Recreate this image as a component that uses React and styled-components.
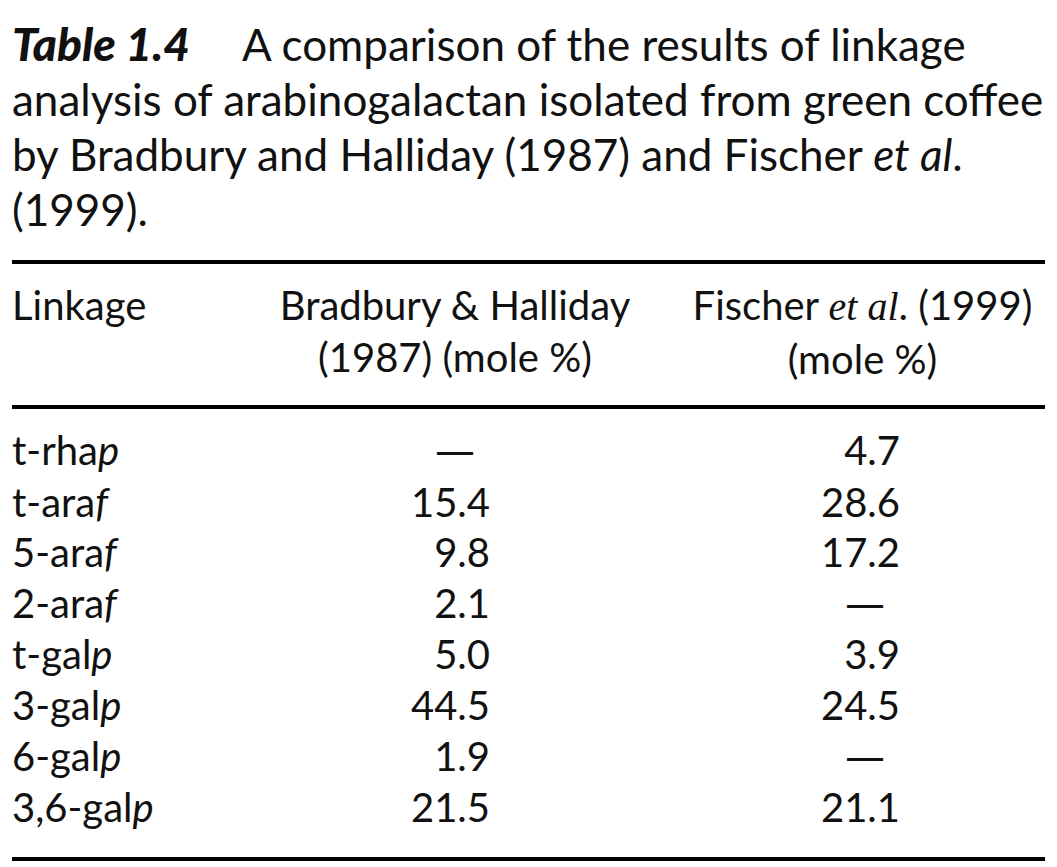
import styled, { createGlobalStyle } from "styled-components";

const GlobalStyle = createGlobalStyle`
  html, body {
    margin: 0;
    padding: 0;
    background: #fff;
  }
  body {
    font-family: Lato, "Open Sans", sans-serif;
    color: #111;
  }
`;

const Page = styled.div`
  width: 1033px;
  padding: 16px 12px 0 12px;
`;

const Caption = styled.p`
  margin: 0 0 23px 0;
  font-size: 44px;
  line-height: 55px;
  white-space: nowrap;
`;

const Label = styled.b`
  font-style: italic;
  font-weight: 900;
  font-size: 46px;
  margin-right: 52px;
`;

const Table = styled.div`
  display: grid;
  grid-template-columns: 238px 410px 385px;
  border-top: 4px solid #000;
  border-bottom: 4px solid #000;
  font-size: 40px;
`;

const Head = styled.div`
  display: contents;
`;

const HeadCell = styled.div`
  padding: 15px 0 20px ${p => p.$shift || 0}px;
  line-height: 52px;
  white-space: nowrap;
  text-align: ${p => (p.$center ? "center" : "left")};
  border-bottom: 4px solid #000;
`;

const Body = styled.div`
  grid-column: 1 / -1;
  display: grid;
  grid-template-columns: 238px 410px 385px;
  padding: 16px 0 24px 0;
  line-height: 50.6px;
`;

const Cell = styled.div`
  text-align: ${p => (p.$num ? "right" : "left")};
  padding-right: ${p => p.$pad || 0}px;
`;

const Dash = styled.span`
  font-family: "DejaVu Sans", sans-serif;
`;

const Serif = styled.i`
  font-family: "Liberation Serif", serif;
`;

const rows = [
  ["t-rha", "p", null, "4.7"],
  ["t-ara", "f", "15.4", "28.6"],
  ["5-ara", "f", "9.8", "17.2"],
  ["2-ara", "f", "2.1", null],
  ["t-gal", "p", "5.0", "3.9"],
  ["3-gal", "p", "44.5", "24.5"],
  ["6-gal", "p", "1.9", null],
  ["3,6-gal", "p", "21.5", "21.1"],
];

const Value = ({ v, pad }) =>
  v ? (
    <Cell $num $pad={pad}>{v}</Cell>
  ) : (
    <Cell $num $pad={pad + 15}>
      <Dash>—</Dash>
    </Cell>
  );

export default function App() {
  return (
    <Page>
      <GlobalStyle />
      <Caption>
        <Label>Table 1.4</Label>A comparison of the results of linkage
        <br />
        analysis of arabinogalactan isolated from green coffee
        <br />
        by Bradbury and Halliday (1987) and Fischer <i>et al</i>.
        <br />
        (1999).
      </Caption>
      <Table>
        <Head>
          <HeadCell>Linkage</HeadCell>
          <HeadCell $center>
            Bradbury &amp; Halliday
            <br />
            (1987) (mole %)
          </HeadCell>
          <HeadCell $center $shift={20}>
            Fischer <Serif>et al</Serif>. (1999)
            <br />
            (mole %)
          </HeadCell>
        </Head>
        <Body>
          {rows.map(([name, suffix, a, b]) => (
            <>
              <Cell key={name}>
                {name}
                <i>{suffix}</i>
              </Cell>
              <Value v={a} pad={170} />
              <Value v={b} pad={145} />
            </>
          ))}
        </Body>
      </Table>
    </Page>
  );
}
